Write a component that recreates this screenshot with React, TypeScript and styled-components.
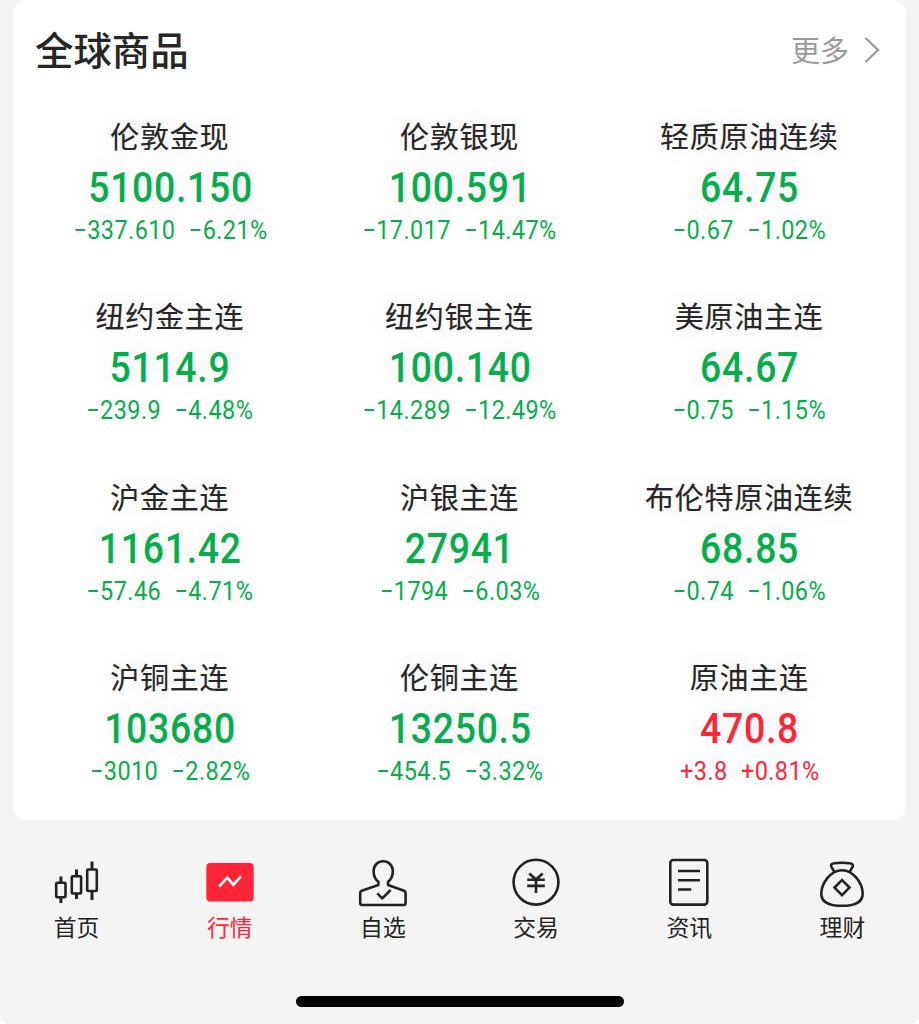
import React from "react";
import styled, { createGlobalStyle } from "styled-components";

const GlobalStyle = createGlobalStyle`
  * { box-sizing: border-box; }
  body {
    margin: 0;
    background: #fff;
    color: #262626;
    font-family: Roboto, "Noto Sans CJK SC", sans-serif;
  }
`;

const GREEN = "#07ad4c";
const RED = "#ff2436";

const Screen = styled.div`
  height: 1024px;
  display: flex;
  flex-direction: column;
  overflow: hidden;
  background: #f4f4f4;
  border-radius: 0 0 9px 9px;
`;

const Card = styled.section`
  height: 820px;
  flex: none;
  margin: 0 13px;
  padding: 0 12px;
  background: #fff;
  border-radius: 14px;
`;

const Header = styled.header`
  height: 98px;
  padding: 0 14px 0 10px;
  display: flex;
  align-items: center;
  justify-content: space-between;
`;

const Title = styled.h2`
  margin: 0 0 2px;
  font: 500 38.4px/56px "Noto Sans CJK SC", sans-serif;
`;

const More = styled.div`
  display: flex;
  align-items: center;
  gap: 15px;
  color: #999;
  font: 400 29px/40px "Noto Sans CJK SC", sans-serif;
  span { margin-bottom: 1px; }
  svg { margin-top: 2px; }
`;

const Grid = styled.div`
  display: grid;
  grid-template-columns: repeat(3, 1fr);
  grid-auto-rows: 180.33px;
`;

const Cell = styled.article`
  padding-top: 16px;
  display: flex;
  flex-direction: column;
  align-items: center;
  white-space: nowrap;
  text-shadow: 0 0 28px rgba(0, 0, 0, 0.12);
`;

const Name = styled.div`
  font: 400 29px/42px "Noto Sans CJK SC", sans-serif;
  letter-spacing: 0.75px;
  -webkit-text-stroke: 0.15px currentColor;
`;

const Price = styled.div<{ $color: string }>`
  margin-top: 7px;
  color: ${(p) => p.$color};
  font: 500 42px/50px Roboto, sans-serif;
  letter-spacing: 0.8px;
  margin-right: -0.8px;
  transform: scaleX(0.89);
`;

const Changes = styled.div<{ $color: string }>`
  margin-top: 1px;
  display: flex;
  gap: 14.5px;
  color: ${(p) => p.$color};
  font: 400 25.5px/32px Roboto, sans-serif;
  letter-spacing: 0.45px;
  margin-right: -0.45px;
  transform: scaleX(0.92);
`;

const TabBar = styled.nav`
  height: 160px;
  flex: none;
  padding-top: 34px;
  display: grid;
  grid-template-columns: repeat(6, 1fr);
`;

const Tab = styled.div<{ $active?: boolean }>`
  display: flex;
  flex-direction: column;
  align-items: center;
  color: ${(p) => (p.$active ? RED : "#222")};
  font: 400 22.8px/34px "Noto Sans CJK SC", sans-serif;
  svg { display: block; }
`;

const HomeIndicator = styled.div`
  width: 328px;
  height: 11px;
  flex: none;
  margin: 16px auto 0;
  border-radius: 6px;
  background: #000;
`;

type Quote = { name: string; price: string; diff: string; rate: string; up?: boolean };

const quotes: Quote[] = [
  { name: "伦敦金现", price: "5100.150", diff: "−337.610", rate: "−6.21%" },
  { name: "伦敦银现", price: "100.591", diff: "−17.017", rate: "−14.47%" },
  { name: "轻质原油连续", price: "64.75", diff: "−0.67", rate: "−1.02%" },
  { name: "纽约金主连", price: "5114.9", diff: "−239.9", rate: "−4.48%" },
  { name: "纽约银主连", price: "100.140", diff: "−14.289", rate: "−12.49%" },
  { name: "美原油主连", price: "64.67", diff: "−0.75", rate: "−1.15%" },
  { name: "沪金主连", price: "1161.42", diff: "−57.46", rate: "−4.71%" },
  { name: "沪银主连", price: "27941", diff: "−1794", rate: "−6.03%" },
  { name: "布伦特原油连续", price: "68.85", diff: "−0.74", rate: "−1.06%" },
  { name: "沪铜主连", price: "103680", diff: "−3010", rate: "−2.82%" },
  { name: "伦铜主连", price: "13250.5", diff: "−454.5", rate: "−3.32%" },
  { name: "原油主连", price: "470.8", diff: "+3.8", rate: "+0.81%", up: true },
];

const Icon = ({ children }: { children: React.ReactNode }) => (
  <svg width="56" height="56" viewBox="0 0 56 56" fill="none" stroke="currentColor" strokeWidth="2.6" strokeLinejoin="round">
    {children}
  </svg>
);

const tabs = [
  {
    label: "首页",
    icon: (
      <Icon>
        <rect x="7.200" y="28.700" width="9.300" height="14.600" rx="1" />
        <rect x="22.800" y="22.300" width="9.300" height="17.200" rx="1" />
        <rect x="38.200" y="15.500" width="9.600" height="21.500" rx="1" />
        <path d="M11.900 22.500v6M11.900 43.500v5.500M27.500 15.500v7M27.500 39.500v5.500M43 7.500v8M43 37v9" strokeWidth="3" />
      </Icon>
    ),
  },
  {
    label: "行情",
    active: true,
    icon: (
      <Icon>
        <rect x="4.300" y="9" width="47.400" height="38.600" rx="4" fill="currentColor" stroke="none" />
        <path d="M17 32.500l8.300-8.800 6 7L39 22.300" stroke="#fff" strokeLinejoin="miter" />
      </Icon>
    ),
  },
  {
    label: "自选",
    icon: (
      <Icon>
        <path d="M23.400 27.800c-3.100-2.200-4.800-6.100-4.800-10.500C18.600 11.300 22.800 7.200 28.200 7.200s9.600 4.100 9.600 10.100c0 4.400-1.700 8.300-4.800 10.500v3.200l16 5.700q1.600.6 1.600 2.300v10q0 2-2 2H7.200q-2 0-2-2V39q0-1.700 1.600-2.300l16.600-5.700z" />
        <path d="M22.300 39.300l5 5 8.300-8.300" />
      </Icon>
    ),
  },
  {
    label: "交易",
    icon: (
      <Icon>
        <circle cx="28" cy="28.200" r="22.400" />
        <path d="M21.300 19.500l6.700 6 6.700-6M19.200 25.700h17.600M19.200 31.900h17.600M28 25.500V39" />
      </Icon>
    ),
  },
  {
    label: "资讯",
    icon: (
      <Icon>
        <rect x="9.300" y="6" width="37" height="44.600" rx="3" />
        <path d="M17 17h22M17 26.200h22M17 35.500h13.200" />
      </Icon>
    ),
  },
  {
    label: "理财",
    icon: (
      <Icon>
        <path d="M20.500 18.200l-3.200-5.500q-1-3.200 3-3.400 7.700-1.200 15.400 0 4 .2 3 3.400l-3.200 5.500" />
        <path d="M28 16.200c-11 0-20.700 12.800-20.700 23.500 0 9 8.500 12.100 20.700 12.100s20.700-3.100 20.700-12.100C48.700 29 39 16.200 28 16.200z" />
        <path d="M28 26.100l7.500 7.500-7.500 7.500-7.500-7.500z" strokeLinejoin="miter" />
      </Icon>
    ),
  },
];

export default function App() {
  return (
    <Screen>
      <GlobalStyle />
      <Card>
        <Header>
          <Title>全球商品</Title>
          <More>
            <span>更多</span>
            <svg width="16" height="26" viewBox="0 0 16 26" fill="none" stroke="currentColor" strokeWidth="2.2">
              <path d="M1.500 1l12.500 12-12.500 12" />
            </svg>
          </More>
        </Header>
        <Grid>
          {quotes.map((q) => {
            const color = q.up ? RED : GREEN;
            return (
              <Cell key={q.name}>
                <Name>{q.name}</Name>
                <Price $color={color}>{q.price}</Price>
                <Changes $color={color}>
                  <span>{q.diff}</span>
                  <span>{q.rate}</span>
                </Changes>
              </Cell>
            );
          })}
        </Grid>
      </Card>
      <TabBar>
        {tabs.map((t) => (
          <Tab key={t.label} $active={t.active}>
            {t.icon}
            {t.label}
          </Tab>
        ))}
      </TabBar>
      <HomeIndicator />
    </Screen>
  );
}
